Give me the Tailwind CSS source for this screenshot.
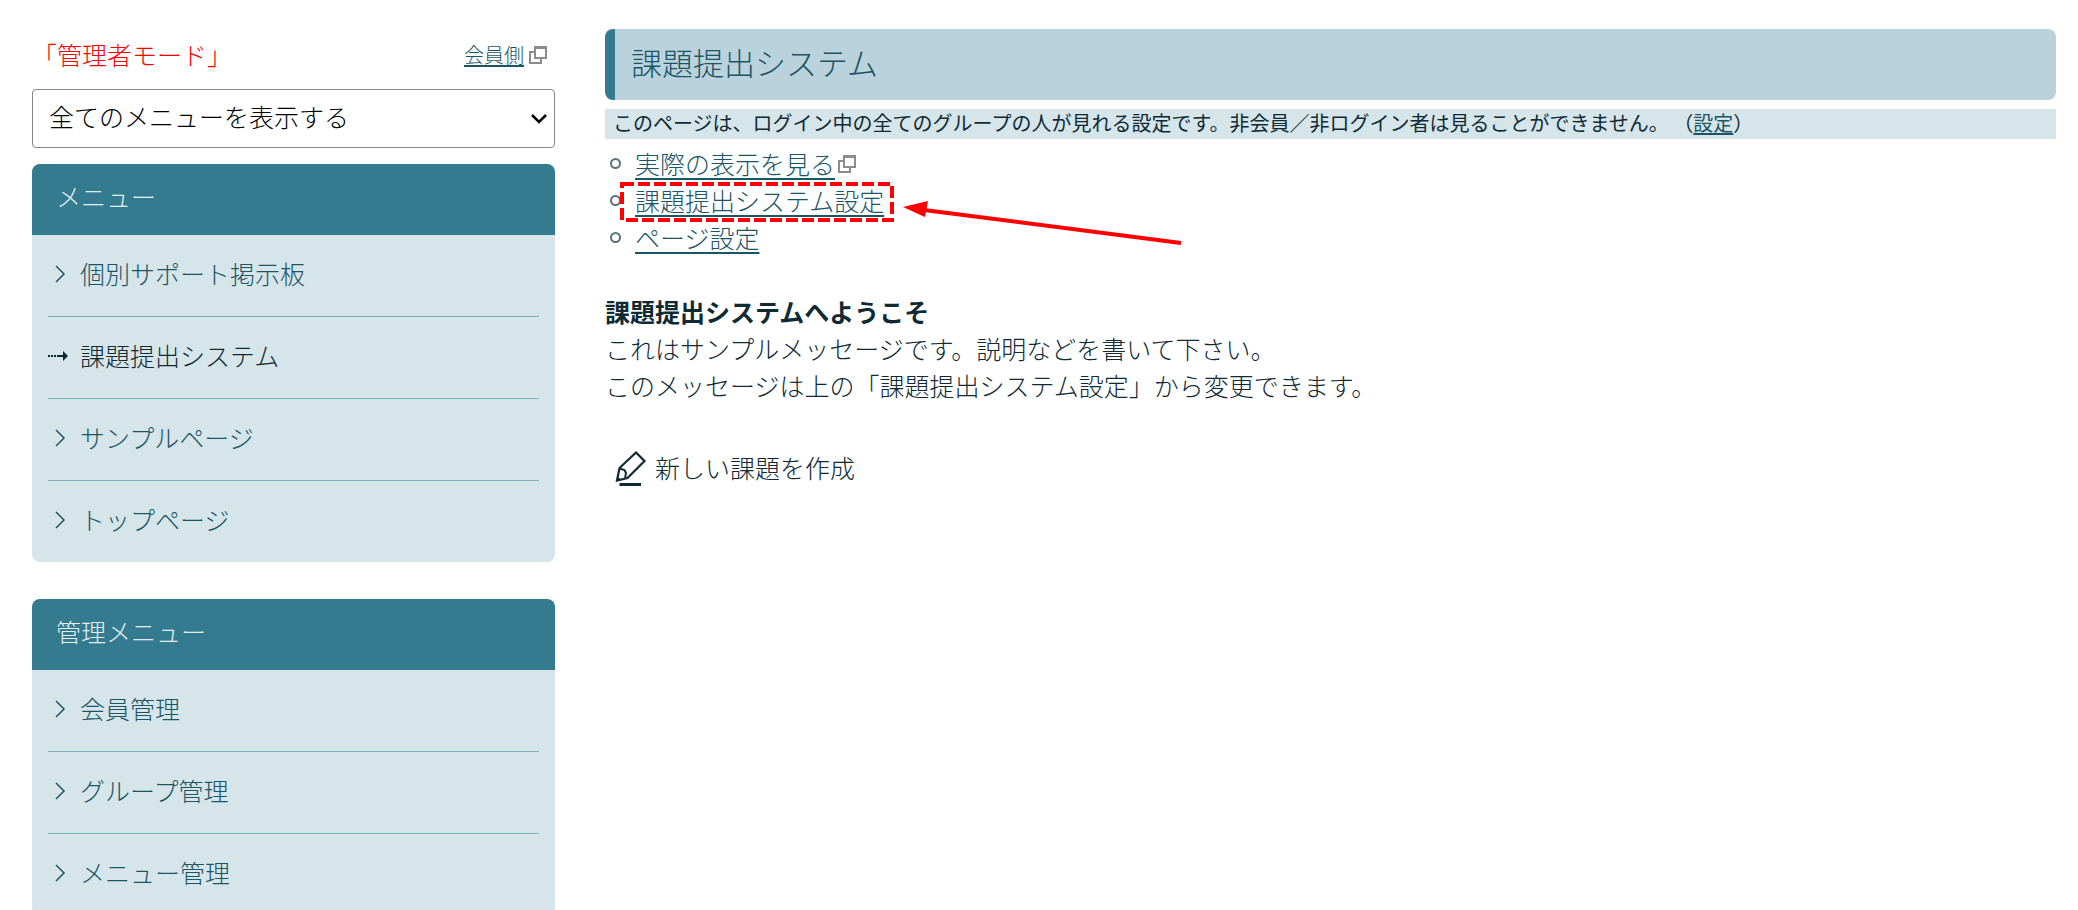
<!DOCTYPE html>
<html lang="ja">

<head>
    <meta charset="UTF-8">
    <meta name="viewport" content="width=device-width, initial-scale=1.0">
    <title>課題提出システム</title>
    <script src="https://cdn.jsdelivr.net/npm/@tailwindcss/browser@4"></script>
</head>

<body class="h-screen overflow-hidden bg-white font-['Noto_Sans_CJK_JP',sans-serif] font-light text-[25px] leading-[37px] text-[#0f2a33]">
    <div class="flex items-start gap-[50px] pl-8 pr-[22px]">
        <!-- Sidebar -->
        <aside class="w-[523px] shrink-0 pt-9">
            <div class="flex items-center justify-between pr-2">
                <p class="text-[#ff0000]">「管理者モード」</p>
                <a href="#" class="flex items-center gap-[5px] text-xl text-[#1b5565]">
                    <span class="underline underline-offset-2">会員側</span>
                    <svg class="w-[18px] h-[18px]" viewBox="0 0 18 18" fill="none" stroke="#8c8c8c" stroke-width="2">
                        <path d="M6 1h11v11H6z" />
                        <path d="M6 1.500h11" stroke-width="3" />
                        <path d="M6 6H1v11h11v-5" />
                    </svg>
                </a>
            </div>

            <div class="relative mt-4">
                <select aria-label="表示メニュー" class="block w-full h-[59px] appearance-none rounded-[4px] border border-[#858585] bg-white pl-4 pr-10 pb-1 text-black">
                    <option>全てのメニューを表示する</option>
                </select>
                <svg class="pointer-events-none absolute right-2 top-6 w-4 h-[11px]" viewBox="0 0 16 11" fill="none" stroke="#000" stroke-width="2.500">
                    <path d="M1 2l7 7 7-7" />
                </svg>
            </div>

            <nav class="mt-4 overflow-hidden rounded-lg bg-[#d6e5ea]">
                <h2 class="bg-[#347b8f] px-6 pt-[14px] pb-5 text-[#e3eef1]">メニュー</h2>
                <ul class="px-4 text-[#1b5565]">
                    <li class="border-b border-[#7fb0bd]">
                        <a href="#" class="flex h-[81px] items-center gap-3 pb-1">
                            <svg class="w-5 h-5" viewBox="0 0 20 20" fill="none" stroke="currentColor" stroke-width="1.500"><path d="M8 2l8 8-8 8" /></svg>
                            個別サポート掲示板
                        </a>
                    </li>
                    <li class="border-b border-[#7fb0bd]">
                        <a href="#" class="flex h-[81px] items-center gap-3 pb-1 text-[#0f2a33]">
                            <svg class="w-5 h-5" viewBox="0 0 20 20" fill="none" stroke="currentColor" stroke-width="2">
                                <path d="M0 10h2M3 10h2M6 10h2M9 10h7" />
                                <path d="M15 5l5 5-5 5z" fill="currentColor" stroke="none" />
                            </svg>
                            課題提出システム
                        </a>
                    </li>
                    <li class="border-b border-[#7fb0bd]">
                        <a href="#" class="flex h-[81px] items-center gap-3 pb-1">
                            <svg class="w-5 h-5" viewBox="0 0 20 20" fill="none" stroke="currentColor" stroke-width="1.500"><path d="M8 2l8 8-8 8" /></svg>
                            サンプルページ
                        </a>
                    </li>
                    <li>
                        <a href="#" class="flex h-[81px] items-center gap-3 pb-1">
                            <svg class="w-5 h-5" viewBox="0 0 20 20" fill="none" stroke="currentColor" stroke-width="1.500"><path d="M8 2l8 8-8 8" /></svg>
                            トップページ
                        </a>
                    </li>
                </ul>
            </nav>

            <nav class="mt-[37px] overflow-hidden rounded-lg bg-[#d6e5ea]">
                <h2 class="bg-[#347b8f] px-6 pt-[14px] pb-5 text-[#e3eef1]">管理メニュー</h2>
                <ul class="px-4 text-[#1b5565]">
                    <li class="border-b border-[#7fb0bd]">
                        <a href="#" class="flex h-[81px] items-center gap-3 pb-1">
                            <svg class="w-5 h-5" viewBox="0 0 20 20" fill="none" stroke="currentColor" stroke-width="1.500"><path d="M8 2l8 8-8 8" /></svg>
                            会員管理
                        </a>
                    </li>
                    <li class="border-b border-[#7fb0bd]">
                        <a href="#" class="flex h-[81px] items-center gap-3 pb-1">
                            <svg class="w-5 h-5" viewBox="0 0 20 20" fill="none" stroke="currentColor" stroke-width="1.500"><path d="M8 2l8 8-8 8" /></svg>
                            グループ管理
                        </a>
                    </li>
                    <li>
                        <a href="#" class="flex h-[81px] items-center gap-3 pb-1">
                            <svg class="w-5 h-5" viewBox="0 0 20 20" fill="none" stroke="currentColor" stroke-width="1.500"><path d="M8 2l8 8-8 8" /></svg>
                            メニュー管理
                        </a>
                    </li>
                </ul>
            </nav>
        </aside>

        <!-- Main content -->
        <main class="min-w-0 flex-1 pt-[29px]">
            <h1 class="rounded-lg border-l-10 border-[#347b8f] bg-[#b9d2dc] px-4 pt-[14px] pb-5 text-[31px] text-[#1b5565]">課題提出システム</h1>
            <p class="mt-[9px] bg-[#d6e5ea] px-2 pb-[2px] text-xl leading-[28px] font-normal">このページは、ログイン中の全てのグループの人が見れる設定です。非会員／非ログイン者は見ることができません。 （<a href="#" class="text-[#1b5565] underline underline-offset-2">設定</a>）</p>

            <ul class="mt-[6px] text-[#1b5565]">
                <li class="flex items-center gap-[14px] pl-[5px]">
                    <span class="w-[11px] h-[11px] rounded-full border-2 border-[#55717a]"></span>
                    <a href="#" class="flex items-center gap-[3px]">
                        <span class="underline decoration-2 underline-offset-4">実際の表示を見る</span>
                        <svg class="w-[18px] h-[18px]" viewBox="0 0 18 18" fill="none" stroke="#8c8c8c" stroke-width="2">
                            <path d="M6 1h11v11H6z" />
                            <path d="M6 1.500h11" stroke-width="3" />
                            <path d="M6 6H1v11h11v-5" />
                        </svg>
                    </a>
                </li>
                <li class="relative flex items-center gap-[14px] pl-[5px]">
                    <span class="w-[11px] h-[11px] rounded-full border-2 border-[#55717a]"></span>
                    <a href="#" class="underline decoration-2 underline-offset-4">課題提出システム設定</a>
                    <!-- Highlight frame and arrow -->
                    <svg class="pointer-events-none absolute left-[15px] top-0 w-[564px] h-[64px]" viewBox="0 0 564 64" fill="none" stroke="#ff0000" stroke-width="4">
                        <path d="M2 2h270v36H2z" stroke-dasharray="12 4" />
                        <path d="M561 61L304 28" />
                        <path d="M283 25l25-6-3 16z" fill="#ff0000" stroke="none" />
                    </svg>
                </li>
                <li class="flex items-center gap-[14px] pl-[5px]">
                    <span class="w-[11px] h-[11px] rounded-full border-2 border-[#55717a]"></span>
                    <a href="#" class="underline decoration-2 underline-offset-4">ページ設定</a>
                </li>
            </ul>

            <div class="mt-[37px]">
                <p class="font-bold">課題提出システムへようこそ</p>
                <p>これはサンプルメッセージです。説明などを書いて下さい。</p>
                <p>このメッセージは上の「課題提出システム設定」から変更できます。</p>
            </div>

            <button type="button" class="mt-[45px] flex items-center gap-2 pl-[10px]">
                <svg class="w-8 h-9" viewBox="0 0 32 36" fill="none" stroke="currentColor" stroke-width="2.200">
                    <path d="M2 30.500L4.500 18 21 2.500 29.500 11 12.500 28z" />
                    <path d="M4.500 18.500l5 1.500 1.500 3-1 5.500" stroke-width="2" />
                    <path d="M1.500 31.500l1-5 4 3.500z" fill="currentColor" stroke="none" />
                    <path d="M4.500 34.500h21.500" stroke-width="3" />
                </svg>
                新しい課題を作成
            </button>
        </main>
    </div>
</body>

</html>
